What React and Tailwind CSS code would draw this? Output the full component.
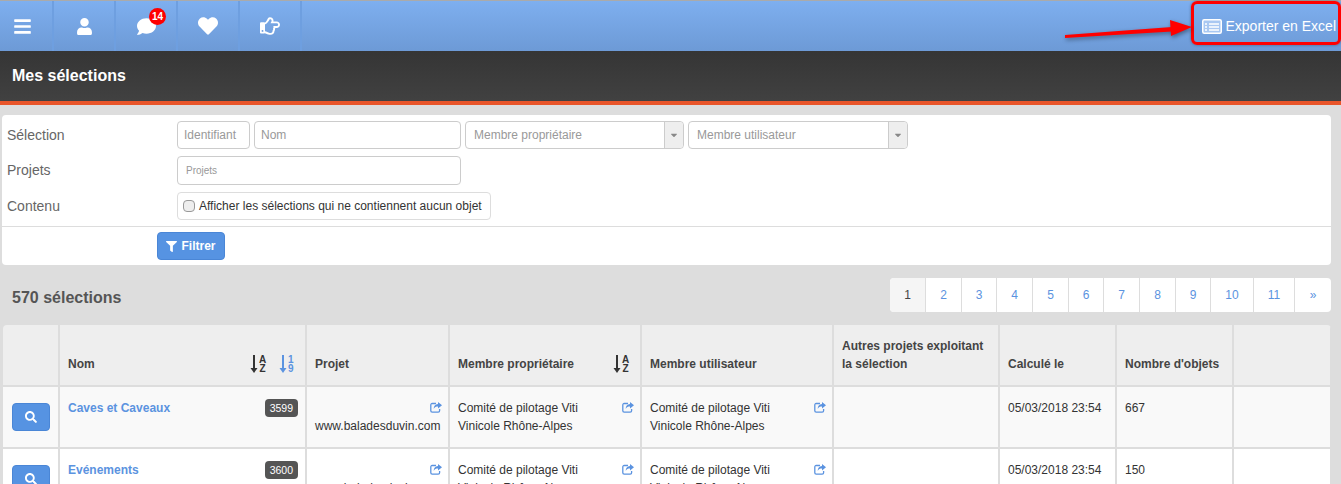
import React from "react";
import { FaBars, FaUser, FaComment, FaHeart, FaRegHandPointRight, FaSearch, FaFilter, FaCaretDown } from "react-icons/fa";

const NavItem = ({ children, className = "w-[62px]" }) => (
  <div className={`relative flex h-full items-center justify-center border-r-2 border-[#6e9fe0] text-white ${className}`}>{children}</div>
);

const Select = ({ label, w }) => (
  <div className={`flex h-7 ${w} rounded border border-[#ccc] bg-white`}>
    <div className="flex-1 pl-2 text-xs leading-[26px] text-[#999]">{label}</div>
    <div className="flex w-[19px] items-center justify-center rounded-r border-l border-[#ccc] bg-[#eee] text-[10px] text-[#888]"><FaCaretDown /></div>
  </div>
);

const Cell = ({ children, className = "" }) => (
  <div className={`relative border-r-2 border-[#ddd] px-2 pt-[12px] text-xs leading-[18px] text-[#333] ${className}`}>{children}</div>
);

const Th = ({ children, className = "" }) => (
  <div className={`relative flex items-end border-r-2 border-[#ddd] px-2 pb-[12px] text-xs font-bold leading-[18px] text-[#444] ${className}`}>{children}</div>
);

const Share = () => (
  <svg className="absolute right-[6px] top-[15px]" width="12" height="11" viewBox="0 0 12 11">
    <path d="M6 1.5H2.2A1.4 1.4 0 0 0 0.8 2.9V8.8A1.4 1.4 0 0 0 2.2 10.2H8.2A1.4 1.4 0 0 0 9.6 8.8V7" fill="none" stroke="#5b93e0" strokeWidth="1.3" />
    <path d="M8 0L12 3.2L8 6.4V4.5C6 4.5 4.6 5 3.7 7C3.7 4 5.2 2.1 8 2Z" fill="#5b93e0" />
  </svg>
);

const Sort = ({ className = "", top, bottom, color = "#333" }) => (
  <div className={`absolute bottom-[12px] flex h-[18px] w-[17px] ${className}`} style={{ color }}>
    <svg width="8" height="18" viewBox="0 0 8 18" className="shrink-0">
      <path d="M4 0V15" stroke={color} strokeWidth="2" />
      <path d="M0.5 13H7.5L4 18Z" fill={color} />
    </svg>
    <div className="ml-[1px] flex flex-col items-center text-[10px] font-bold leading-[9px]">
      <span>{top}</span>
      <span>{bottom}</span>
    </div>
  </div>
);

const cols = "grid-cols-[57px_247px_143px_192px_192px_166px_117px_117px_98px]";

const Row = ({ name, id, project, n, bg }) => (
  <div className={`grid h-[62px] ${cols} border-b-2 border-[#ddd] ${bg}`}>
    <Cell className="!px-0 !pt-[11px]">
      <div className="ml-[9px] mt-[5px] flex h-7 w-[38px] items-center justify-center rounded border border-[#4a86d6] bg-[#5693e2] text-[12px] text-white"><FaSearch /></div>
    </Cell>
    <Cell>
      <a className="font-bold text-[#5b93e0]">{name}</a>
      <span className="absolute right-[7px] top-[12px] rounded bg-[#555] px-[5px] text-[10.5px] leading-[18px] text-white">{id}</span>
    </Cell>
    <Cell>
      <Share />
      <div className="pt-[18px] text-right">{project}</div>
    </Cell>
    <Cell><Share />Comité de pilotage Viti<br />Vinicole Rhône-Alpes</Cell>
    <Cell><Share />Comité de pilotage Viti<br />Vinicole Rhône-Alpes</Cell>
    <Cell />
    <Cell>05/03/2018 23:54</Cell>
    <Cell>{n}</Cell>
    <Cell />
  </div>
);

const pages = [["1", 36], ["2", 36], ["3", 35], ["4", 36], ["5", 36], ["6", 35], ["7", 36], ["8", 36], ["9", 35], ["10", 43], ["11", 41], ["»", 36]];

export default function App() {
  return (
    <div className="relative h-[484px] w-[1341px] overflow-hidden bg-[#ddd] font-['Liberation_Sans',Arial,sans-serif]">
      <div className="flex h-[51px] border-t border-[#aaa] bg-gradient-to-b from-[#7eafef] to-[#6d9ad6]">
        <NavItem className="w-[54px]"><FaBars className="-ml-[7px] text-[19px]" /></NavItem>
        <NavItem><FaUser className="text-[17px]" /></NavItem>
        <NavItem>
          <FaComment className="text-[19px]" />
          <span className="absolute left-[33px] top-[7px] flex h-[17px] w-[17px] items-center justify-center rounded-full bg-[#f00] text-[10px] font-bold text-white">14</span>
        </NavItem>
        <NavItem><FaHeart className="text-[20px]" /></NavItem>
        <NavItem><FaRegHandPointRight className="text-[20px]" /></NavItem>
        <div className="ml-auto flex items-center pr-[5px] text-sm text-white">
          <svg width="20" height="15" viewBox="0 0 20 15" className="mr-[4px]">
            <rect x="0.75" y="0.75" width="18.5" height="13.5" rx="1.5" fill="#a9c8f2" stroke="#fff" strokeWidth="1.5" />
            <path d="M3 5H5M7 5H17M3 8H5M7 8H17M3 11H5M7 11H17" stroke="#fff" strokeWidth="1.4" />
          </svg>
          Exporter en Excel
        </div>
      </div>

      <div className="h-[54px] border-b-4 border-[#e8552a] bg-gradient-to-b from-[#353535] to-[#414141] pl-3 pt-[15px] text-base font-bold leading-5 text-white">Mes sélections</div>

      <div className="ml-[2px] mt-[10px] h-[150px] w-[1329px] rounded bg-white">
        <div className="h-[111px] pl-[5px] pt-[6px] text-sm text-[#666]">
          <div className="flex h-7 items-center">
            <div className="w-[170px]">Sélection</div>
            <div className="flex gap-[4px]">
              <div className="h-7 w-[73px] rounded border border-[#ccc] pl-[6px] text-xs leading-[26px] text-[#999]">Identifiant</div>
              <div className="h-7 w-[207px] rounded border border-[#ccc] pl-[6px] text-xs leading-[26px] text-[#999]">Nom</div>
              <Select label="Membre propriétaire" w="w-[219px]" />
              <Select label="Membre utilisateur" w="w-[220px]" />
            </div>
          </div>
          <div className="mt-[7px] flex h-[29px] items-center">
            <div className="mb-[2px] w-[170px]">Projets</div>
            <div className="h-[29px] w-[284px] rounded border border-[#ccc] pl-2 text-[10px] leading-[27px] text-[#999]">Projets</div>
          </div>
          <div className="mt-[7px] flex h-7 items-center">
            <div className="w-[170px]">Contenu</div>
            <div className="flex h-7 w-[314px] items-center rounded border border-[#ddd] pl-[5px] text-xs text-[#333]">
              <span className="mr-[4px] h-[12px] w-[12px] rounded-sm border border-[#999] bg-[#eee]" />
              Afficher les sélections qui ne contiennent aucun objet
            </div>
          </div>
        </div>
        <div className="h-[39px] border-t border-[#ddd] pl-[155px] pt-[5px]">
          <div className="flex h-7 w-[68px] items-center justify-center gap-[4px] rounded border border-[#4a86d6] bg-[#5693e2] text-xs font-bold text-white">
            <FaFilter className="text-[11px]" />Filtrer
          </div>
        </div>
      </div>

      <div className="flex h-[60px] items-center justify-between pl-3 pr-[10px]">
        <div className="mt-[6px] text-base font-bold text-[#555]">570 sélections</div>
        <div className="flex h-[34px] rounded bg-white text-xs text-[#5b93e0]">
          {pages.map(([p, w], i) => (
            <div key={p} style={{ width: w }} className={`flex items-center justify-center border-r border-[#ddd] last:border-r-0 ${i === 0 ? "rounded-l bg-[#f5f5f5] text-[#444]" : ""}`}>{p}</div>
          ))}
        </div>
      </div>

      <div className="ml-[3px] w-[1328px] overflow-hidden rounded-t">
        <div className={`grid h-[62px] ${cols} border-b-2 border-[#ddd] bg-[#eee]`}>
          <Th />
          <Th>Nom
            <Sort className="right-[38px]" top="A" bottom="Z" />
            <Sort className="right-[9px]" top="1" bottom="9" color="#5b93e0" />
          </Th>
          <Th>Projet</Th>
          <Th>Membre propriétaire<Sort className="right-[10px]" top="A" bottom="Z" /></Th>
          <Th>Membre utilisateur</Th>
          <Th>Autres projets exploitant<br />la sélection</Th>
          <Th>Calculé le</Th>
          <Th>Nombre d'objets</Th>
          <Th />
        </div>
        <Row name="Caves et Caveaux" id="3599" project="www.baladesduvin.com" n="667" bg="bg-[#f9f9f9]" />
        <Row name="Evénements" id="3600" project="www.baladesduvin.com" n="150" bg="bg-white" />
      </div>

      <div className="pointer-events-none absolute left-[1191px] top-[1px] h-[44px] w-[150px] rounded-md border-[3px] border-[#f00] shadow-[0_0_3px_rgba(0,0,0,0.4)]" />
      <svg className="pointer-events-none absolute left-[1060px] top-[15px] drop-shadow-[1px_2px_2px_rgba(0,0,0,0.4)]" width="134" height="26" viewBox="0 0 134 26">
        <path d="M5 20 L112 12 L112 16.5 L5 23Z" fill="#f00" />
        <path d="M110 5 L132 12 L111 21 Z" fill="#f00" />
      </svg>
    </div>
  );
}
